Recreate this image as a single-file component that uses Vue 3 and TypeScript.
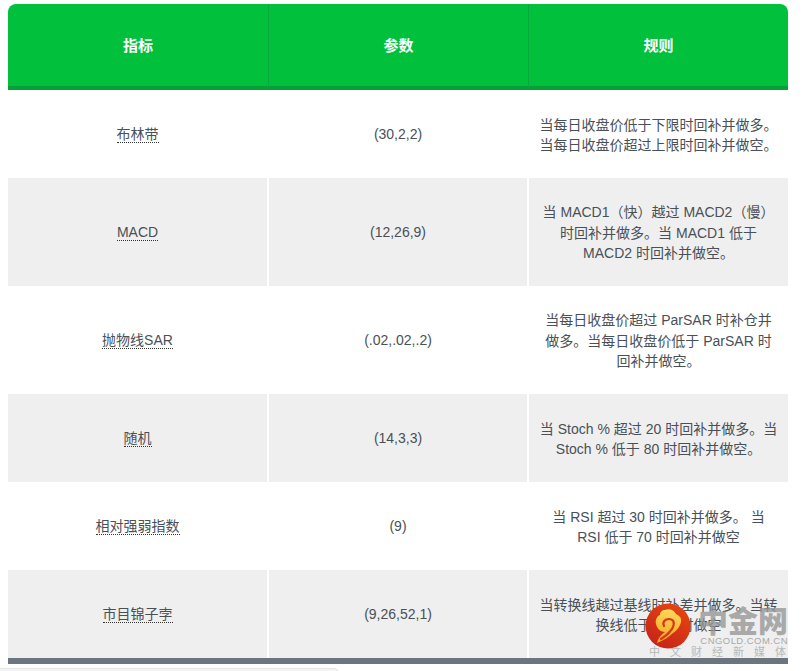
<script setup lang="ts">
interface Row { name: string; params: string; rule: string }
const rows: Row[] = [
  { name: '布林带', params: '(30,2,2)', rule: '当每日收盘价低于下限时回补并做多。当每日收盘价超过上限时回补并做空。' },
  { name: 'MACD', params: '(12,26,9)', rule: '当 MACD1（快）越过 MACD2（慢）时回补并做多。当 MACD1 低于 MACD2 时回补并做空。' },
  { name: '抛物线SAR', params: '(.02,.02,.2)', rule: '当每日收盘价超过 ParSAR 时补仓并做多。当每日收盘价低于 ParSAR 时回补并做空。' },
  { name: '随机', params: '(14,3,3)', rule: '当 Stoch % 超过 20 时回补并做多。当 Stoch % 低于 80 时回补并做空。' },
  { name: '相对强弱指数', params: '(9)', rule: '当 RSI 超过 30 时回补并做多。 当 RSI 低于 70 时回补并做空' },
  { name: '市目锦子孛', params: '(9,26,52,1)', rule: '当转换线越过基线时补差并做多。当转换线低于基线时做空' },
]
</script>

<template>
  <div class="page">
    <table class="grid">
      <thead>
        <tr><th>指标</th><th>参数</th><th>规则</th></tr>
      </thead>
      <tbody>
        <tr v-for="r in rows" :key="r.name">
          <td><span class="term">{{ r.name }}</span></td>
          <td>{{ r.params }}</td>
          <td class="rule">{{ r.rule }}</td>
        </tr>
      </tbody>
    </table>
    <div class="scroll"></div>

    <div class="mark">
      <div class="brand">
        <div class="cn">中金网</div>
        <div class="en">CNGOLD.COM.CN</div>
      </div>
      <div class="slogan"><span>中</span><span>文</span><span>财</span><span>经</span><span>新</span><span>媒</span><span>体</span></div>
      <svg class="logo" width="46" height="46" viewBox="0 0 46 46">
        <defs>
          <linearGradient id="disc" x1="0.8" y1="0" x2="0.2" y2="1">
            <stop offset="0" stop-color="#e8450f" />
            <stop offset="1" stop-color="#c4231a" />
          </linearGradient>
          <linearGradient id="swirl" x1="0.5" y1="0" x2="0.4" y2="1">
            <stop offset="0" stop-color="#fdd85c" />
            <stop offset="1" stop-color="#f6a21e" />
          </linearGradient>
        </defs>
        <circle cx="23" cy="23" r="22.5" fill="url(#disc)" />
        <path fill="url(#swirl)" d="M12 40C19 37 24 34 28 30C31 28 35 24 36 19C37 14 33 12 31 11C29 7 24 5 20 7C17 7 15 9 15 12C12 13 10 17 11 21C12 26 16 29 20 29C14 33 13 37 12 40Z" />
        <path fill="none" stroke="#d8381a" stroke-width="2.2" stroke-linecap="round" d="M19 23C17 19 20 16 24 16C28 16 30 19 28 24C26 29 22 32 16 36" />
      </svg>
    </div>
  </div>
</template>

<style>
html, body { margin: 0; background: #fff; overflow: hidden; }
</style>

<style scoped>
.page {
  position: relative;
  height: 671px;
  padding: 4px 14px 0 8px;
  box-sizing: border-box;
  font-family: "Liberation Sans", "Noto Sans CJK SC", sans-serif;
  overflow: hidden;
}
.grid {
  width: 780px;
  table-layout: fixed;
  border-collapse: separate;
  border-spacing: 0;
  border-bottom: 6px solid #6c757d;
  color: #495057;
  font-size: 14px;
  line-height: 21px;
  text-align: center;
}
th {
  height: 82px;
  padding: 0;
  background: #00c03c;
  color: #fff;
  font-size: 15px;
  font-weight: 700;
  border-bottom: 4px solid #07a038;
  border-left: 1px solid #07a83c;
}
th:first-child { border-left: 0; border-top-left-radius: 8px; }
th:last-child { border-top-right-radius: 8px; }
td {
  height: 88px;
  padding: 0 8px;
  box-sizing: border-box;
  border-left: 1px solid #fff;
  border-right: 1px solid #fff;
}
td:first-child { border-left: 0; }
td:last-child { border-right: 0; }
tbody tr:nth-child(even) td { background: #efefef; background-clip: padding-box; }
td.rule { padding: 2px 10.5px 0; line-height: 20.5px; }
tbody tr:nth-child(2) td, tbody tr:nth-child(3) td { height: 108px; }
.term { border-bottom: 1px dotted #333; }
.scroll {
  position: absolute;
  left: -6px;
  top: 668px;
  width: 343px;
  height: 12px;
  border: 1px solid #e4e4e4;
  border-radius: 5px;
  background: #f4f4f4;
}
.mark {
  position: absolute;
  left: 645px;
  top: 603px;
  width: 143px;
  height: 55px;
  pointer-events: none;
}
.logo { position: absolute; left: 0; top: 0; }
.brand { position: absolute; left: 50px; top: 0; width: 93px; text-align: right; }
.cn {
  font-size: 30px;
  line-height: 33px;
  font-weight: 900;
  color: rgba(150, 150, 150, 0.8);
  white-space: nowrap;
  font-family: "Noto Sans CJK SC", sans-serif;
}
.en {
  font-size: 9.5px;
  line-height: 10px;
  letter-spacing: 0.45px;
  color: #a8a8a8;
  white-space: nowrap;
}
.slogan {
  position: absolute;
  left: 4px;
  right: 2px;
  top: 43px;
  display: flex;
  justify-content: space-between;
  font-size: 11px;
  line-height: 12px;
  color: #b8b8b8;
}
</style>
